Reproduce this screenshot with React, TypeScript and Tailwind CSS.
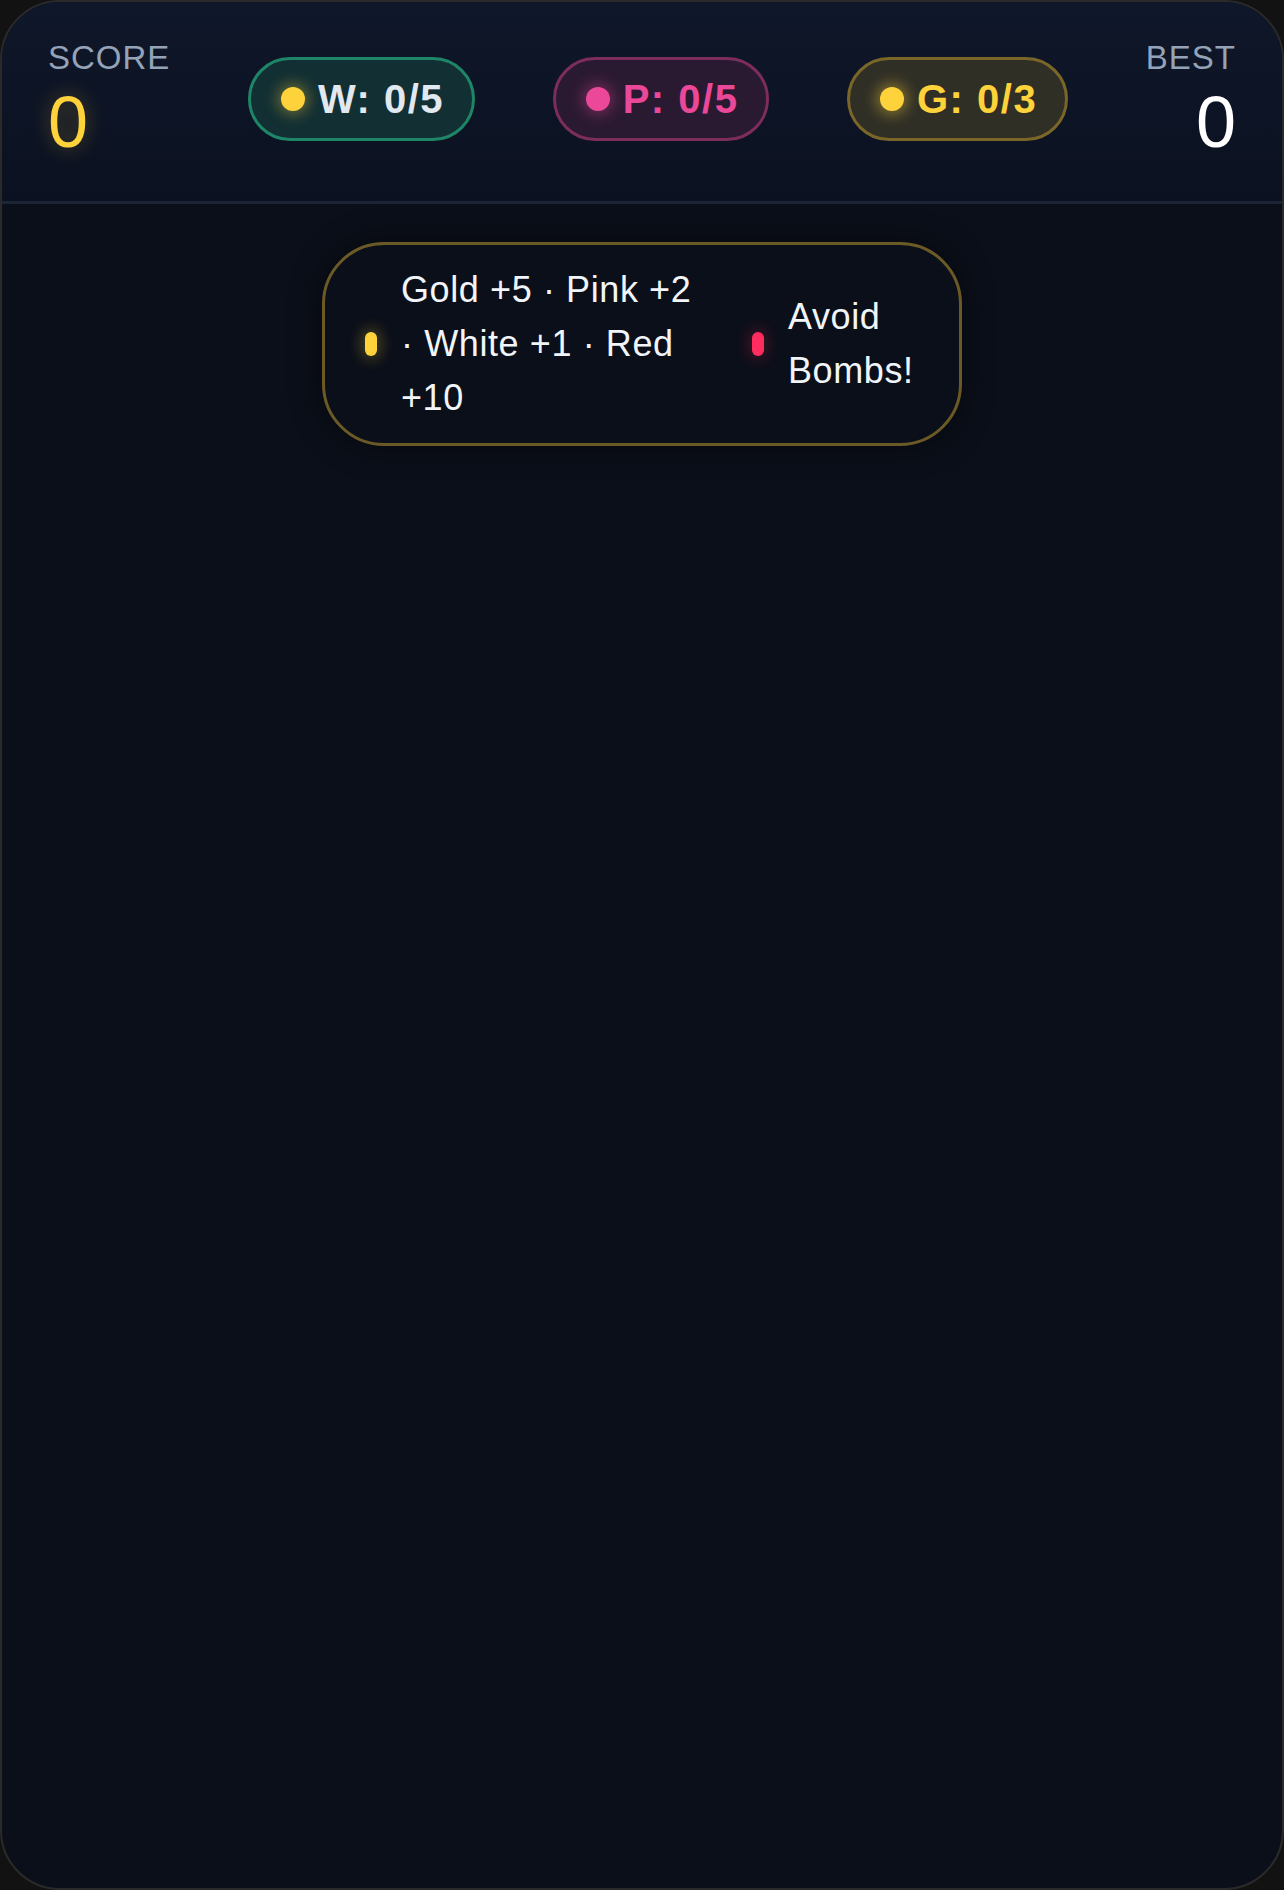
const FONT = "font-['Liberation_Sans','Arial',sans-serif]";

type Pill = {
  label: string;
  dot: string;
  box: string;
  text: string;
};

const pills: Pill[] = [
  {
    label: 'W: 0/5',
    dot: 'bg-[#fdd23a] shadow-[0_0_14px_4px_rgba(253,210,58,0.35)]',
    box: 'border-[#1f8567] bg-[#122f33]',
    text: 'text-[#e2e8f0]',
  },
  {
    label: 'P: 0/5',
    dot: 'bg-[#ec4899] shadow-[0_0_14px_4px_rgba(236,72,153,0.35)]',
    box: 'border-[#7d2d5c] bg-[#2a1a31]',
    text: 'text-[#ec4899]',
  },
  {
    label: 'G: 0/3',
    dot: 'bg-[#fdd23a] shadow-[0_0_14px_4px_rgba(253,210,58,0.4)]',
    box: 'border-[#7a6628] bg-[#302f26]',
    text: 'text-[#fdd23a]',
  },
];

export default function App() {
  return (
    <div className={`h-screen w-full bg-[#121212] ${FONT}`}>
      <div className="flex h-full w-full flex-col overflow-hidden rounded-[60px] border-2 border-[#2a2a2a] bg-[#0b0f19]">
        {/* header */}
        <header className="flex h-[202px] shrink-0 items-center justify-between border-b-[3px] border-[#1c2536] bg-gradient-to-b from-[#0f172a] to-[#0b1120] px-[46px] pb-[6px]">
          <div className="flex flex-col">
            <div className="text-[33px] leading-[36px] tracking-[1px] text-[#94a3b8]">SCORE</div>
            <div className="mt-[10px] text-[72px] leading-[72px] text-[#fdd23a] [text-shadow:0_0_20px_rgba(253,210,58,0.35)]">
              0
            </div>
          </div>

          {pills.map((p) => (
            <div
              key={p.label}
              className={`flex h-[84px] items-center gap-[13px] rounded-full border-[3px] pl-[30px] pr-[28px] ${p.box}`}
            >
              <span className={`h-[24px] w-[24px] shrink-0 rounded-full ${p.dot}`} />
              <span className={`text-[40px] font-bold leading-none tracking-[1.5px] ${p.text}`}>{p.label}</span>
            </div>
          ))}

          <div className="flex flex-col items-end">
            <div className="text-[33px] leading-[36px] tracking-[1px] text-[#94a3b8]">BEST</div>
            <div className="mt-[10px] text-[72px] leading-[72px] text-white">0</div>
          </div>
        </header>

        {/* tip */}
        <div className="flex justify-center pt-[38px]">
          <div className="flex h-[204px] w-[640px] items-center rounded-[62px] border-[3px] border-[#6b5a25] pl-[40px] shadow-[0_0_30px_rgba(0,0,0,0.5)]">
            <span className="h-[24px] w-[12px] shrink-0 rounded-full bg-[#fdd23a] shadow-[0_0_14px_4px_rgba(253,210,58,0.25)]" />
            <p className="ml-[24px] w-[302px] text-[36px] leading-[54px] tracking-[0.6px] text-[#f1f5f9]">
              Gold +5 · Pink +2 · White +1 · Red +10
            </p>
            <span className="ml-[49px] h-[24px] w-[12px] shrink-0 rounded-full bg-[#ff2d5f] shadow-[0_0_14px_4px_rgba(255,45,95,0.2)]" />
            <p className="ml-[24px] w-[134px] text-[36px] leading-[54px] tracking-[0.6px] text-[#f1f5f9]">Avoid Bombs!</p>
          </div>
        </div>

        <div className="flex-1" />
      </div>
    </div>
  );
}
